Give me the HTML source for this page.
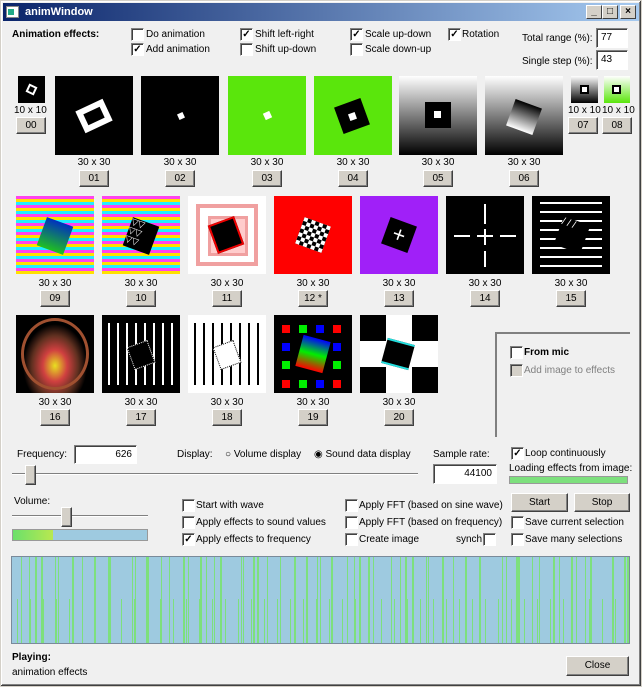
<!DOCTYPE html>
<html><head><meta charset="utf-8"><style>
*{box-sizing:border-box;margin:0;padding:0}
body{width:642px;height:687px;background:#f0f0f0;font-family:"Liberation Sans",sans-serif;font-size:10px;color:#000;position:relative;overflow:hidden}
.a{position:absolute;white-space:nowrap}
.win{position:absolute;left:0;top:0;width:642px;height:687px;border:1px solid #d4d0c8;box-shadow:inset -1px -1px #404040,inset 1px 1px #fff,inset -2px -2px #808080}
.title{position:absolute;left:3px;top:3px;width:636px;height:18px;background:linear-gradient(90deg,#0a246a,#a6caf0);color:#fff;font-weight:bold;font-size:11px;line-height:18px;padding-left:22px}
.tb{position:absolute;top:5px;width:16px;height:14px;background:#d4d0c8;border:1px solid;border-color:#fff #404040 #404040 #fff;font-size:10px;line-height:12px;text-align:center;font-weight:bold;color:#000}
.btn{position:absolute;height:17px;background:#d4d0c8;border:1px solid;border-color:#fff #404040 #404040 #fff;box-shadow:inset -1px -1px #808080;text-align:center;line-height:15px;font-size:10px}
.cb{position:absolute;width:13px;height:13px;background:#fff;border:1px solid;border-color:#808080 #fff #fff #808080;box-shadow:inset 1px 1px #404040;font-size:10px;line-height:11px;text-align:center;font-weight:bold}
.inp{position:absolute;background:#fff;border:1px solid;border-color:#808080 #fff #fff #808080;box-shadow:inset 1px 1px #404040;padding:3px 4px;font-size:10px}
.im{position:absolute;overflow:hidden}
.lbl{position:absolute;width:78px;text-align:center}
.sq{position:absolute}
.stripe{background:repeating-linear-gradient(180deg,#ff44ee 0 3px,#ffe000 3px 6px,#22eeff 6px 9px),#f4f}
</style></head><body>
<div class="win"></div>
<div class="title">animWindow</div>
<div class="a" style="left:6px;top:6px;width:13px;height:12px;background:#fff;border:1px solid #888"><div style="position:absolute;left:1px;top:2px;width:6px;height:6px;background:#2a8"></div></div>
<div class="tb" style="left:586px">_</div><div class="tb" style="left:602px">□</div><div class="tb" style="left:620px">×</div>

<div class="a" style="left:12px;top:29px;font-weight:bold">Animation effects:</div>
<div class="cb" style="left:131px;top:28px"></div><div class="a" style="left:146px;top:29px">Do animation</div>
<div class="cb" style="left:131px;top:43px">✓</div><div class="a" style="left:146px;top:44px">Add animation</div>
<div class="cb" style="left:240px;top:28px">✓</div><div class="a" style="left:255px;top:29px">Shift left-right</div>
<div class="cb" style="left:240px;top:43px"></div><div class="a" style="left:255px;top:44px">Shift up-down</div>
<div class="cb" style="left:350px;top:28px">✓</div><div class="a" style="left:365px;top:29px">Scale up-down</div>
<div class="cb" style="left:350px;top:43px"></div><div class="a" style="left:365px;top:44px">Scale down-up</div>
<div class="cb" style="left:448px;top:28px">✓</div><div class="a" style="left:462px;top:29px">Rotation</div>
<div class="a" style="left:522px;top:33px">Total range (%):</div><div class="inp" style="left:596px;top:28px;width:32px;height:20px">77</div>
<div class="a" style="left:522px;top:56px">Single step (%):</div><div class="inp" style="left:596px;top:50px;width:32px;height:20px">43</div>

<!-- row1 -->
<div class="im" style="left:18px;top:76px;width:27px;height:27px;background:#000"><div class="sq" style="left:9px;top:9px;width:9px;height:9px;border:2px solid #fff;transform:rotate(25deg)"></div></div>
<div class="a" style="left:14px;top:105px">10 x 10</div><div class="btn" style="left:16px;top:117px;width:30px">00</div>

<div class="im" style="left:55px;top:76px;width:78px;height:79px;background:#000"><div class="sq" style="left:24px;top:28px;width:30px;height:24px;border:6px solid #fff;transform:rotate(-25deg)"></div></div>
<div class="im" style="left:141px;top:76px;width:78px;height:79px;background:#000"><div class="sq" style="left:37px;top:37px;width:6px;height:6px;background:#fff;transform:rotate(-25deg)"></div></div>
<div class="im" style="left:228px;top:76px;width:78px;height:79px;background:#5ae60c"><div class="sq" style="left:36px;top:36px;width:7px;height:7px;background:#fff;transform:rotate(-25deg)"></div></div>
<div class="im" style="left:314px;top:76px;width:78px;height:79px;background:#5ae60c"><div class="sq" style="left:24px;top:26px;width:28px;height:28px;background:#000;transform:rotate(-20deg)"></div><div class="sq" style="left:35px;top:37px;width:7px;height:7px;background:#fff;transform:rotate(-20deg)"></div></div>
<div class="im" style="left:399px;top:76px;width:78px;height:79px;background:linear-gradient(#fff,#000)"><div class="sq" style="left:26px;top:26px;width:26px;height:26px;background:#000"></div><div class="sq" style="left:35px;top:35px;width:7px;height:7px;background:#fff"></div></div>
<div class="im" style="left:485px;top:76px;width:78px;height:79px;background:linear-gradient(#fff,#000)"><div class="sq" style="left:25px;top:27px;width:28px;height:28px;background:linear-gradient(#000,#fff);transform:rotate(20deg)"></div></div>
<div class="im" style="left:571px;top:76px;width:27px;height:27px;background:linear-gradient(#fff,#000)"><div class="sq" style="left:9px;top:9px;width:9px;height:9px;background:#000;border:2px solid #000"><div style="width:5px;height:5px;background:#fff"></div></div></div>
<div class="im" style="left:604px;top:76px;width:26px;height:27px;background:linear-gradient(#fff,#5ae60c)"><div class="sq" style="left:8px;top:9px;width:9px;height:9px;background:#000;border:2px solid #000"><div style="width:5px;height:5px;background:#fff"></div></div></div>
<div class="a" style="left:568px;top:105px">10 x 10</div><div class="a" style="left:602px;top:105px">10 x 10</div>
<div class="btn" style="left:568px;top:117px;width:30px">07</div><div class="btn" style="left:602px;top:117px;width:30px">08</div>

<div class="lbl" style="left:55px;top:157px">30 x 30</div><div class="btn" style="left:79px;top:170px;width:30px">01</div>
<div class="lbl" style="left:141px;top:157px">30 x 30</div><div class="btn" style="left:165px;top:170px;width:30px">02</div>
<div class="lbl" style="left:228px;top:157px">30 x 30</div><div class="btn" style="left:252px;top:170px;width:30px">03</div>
<div class="lbl" style="left:314px;top:157px">30 x 30</div><div class="btn" style="left:338px;top:170px;width:30px">04</div>
<div class="lbl" style="left:399px;top:157px">30 x 30</div><div class="btn" style="left:423px;top:170px;width:30px">05</div>
<div class="lbl" style="left:485px;top:157px">30 x 30</div><div class="btn" style="left:509px;top:170px;width:30px">06</div>

<!-- row2 -->
<div class="im stripe" style="left:16px;top:196px;width:78px;height:78px"><div class="sq" style="left:25px;top:25px;width:28px;height:30px;background:linear-gradient(#0030c0,#20c020);transform:rotate(20deg)"></div></div>
<div class="im stripe" style="left:102px;top:196px;width:78px;height:78px"><div class="sq" style="left:25px;top:25px;width:28px;height:30px;background:#000;transform:rotate(20deg);color:#fff;font-size:9px;line-height:9px">▽▽<br>▽▽<br>▽▽</div></div>
<div class="im" style="left:188px;top:196px;width:78px;height:78px;background:#fff"><div class="sq" style="left:8px;top:8px;width:62px;height:62px;border:4px solid #f0a0a0"></div><div class="sq" style="left:20px;top:20px;width:40px;height:40px;background:#fcc;border:3px solid #f0a0a0"></div><div class="sq" style="left:24px;top:24px;width:28px;height:30px;background:#000;border:2px solid #e00;transform:rotate(-20deg)"></div></div>
<div class="im" style="left:274px;top:196px;width:78px;height:78px;background:#f00"><div class="sq" style="left:25px;top:25px;width:28px;height:28px;transform:rotate(20deg);background:conic-gradient(#000 25%,#fff 0 50%,#000 0 75%,#fff 0);background-size:8px 8px"></div></div>
<div class="im" style="left:360px;top:196px;width:78px;height:78px;background:#a020f8"><div class="sq" style="left:25px;top:25px;width:28px;height:28px;background:#000;transform:rotate(20deg);color:#fff;font-size:22px;line-height:28px;text-align:center">+</div></div>
<div class="im" style="left:446px;top:196px;width:78px;height:78px;background:#000"><div class="sq" style="left:38px;top:8px;width:2px;height:20px;background:#fff"></div><div class="sq" style="left:38px;top:33px;width:2px;height:16px;background:#fff"></div><div class="sq" style="left:38px;top:55px;width:2px;height:16px;background:#fff"></div><div class="sq" style="left:8px;top:39px;width:16px;height:2px;background:#fff"></div><div class="sq" style="left:31px;top:39px;width:16px;height:2px;background:#fff"></div><div class="sq" style="left:54px;top:39px;width:16px;height:2px;background:#fff"></div></div>
<div class="im" style="left:532px;top:196px;width:78px;height:78px;background:#000"><div class="sq" style="left:8px;top:6px;width:62px;height:66px;background:repeating-linear-gradient(#fff 0 2px,transparent 2px 9px)"></div><div class="sq" style="left:26px;top:24px;width:28px;height:30px;background:#000;transform:rotate(20deg);color:#fff">/ / /</div></div>

<div class="lbl" style="left:16px;top:278px">30 x 30</div><div class="btn" style="left:40px;top:290px;width:30px">09</div>
<div class="lbl" style="left:102px;top:278px">30 x 30</div><div class="btn" style="left:126px;top:290px;width:30px">10</div>
<div class="lbl" style="left:188px;top:278px">30 x 30</div><div class="btn" style="left:212px;top:290px;width:30px">11</div>
<div class="lbl" style="left:274px;top:278px">30 x 30</div><div class="btn" style="left:298px;top:290px;width:30px">12 *</div>
<div class="lbl" style="left:360px;top:278px">30 x 30</div><div class="btn" style="left:384px;top:290px;width:30px">13</div>
<div class="lbl" style="left:446px;top:278px">30 x 30</div><div class="btn" style="left:470px;top:290px;width:30px">14</div>
<div class="lbl" style="left:532px;top:278px">30 x 30</div><div class="btn" style="left:556px;top:290px;width:30px">15</div>

<!-- row3 -->
<div class="im" style="left:16px;top:315px;width:78px;height:78px;background:radial-gradient(ellipse at 50% 65%,#e8e020 0,#d04040 22%,#603020 42%,#000 58%)"><div class="sq" style="left:5px;top:3px;width:68px;height:72px;border:3px solid #a05030;border-radius:50%"></div></div>
<div class="im" style="left:102px;top:315px;width:78px;height:78px;background:#000"><div class="sq" style="left:6px;top:8px;width:68px;height:62px;background:repeating-linear-gradient(90deg,#fff 0 2px,transparent 2px 9px)"></div><div class="sq" style="left:28px;top:28px;width:22px;height:24px;background:#000;transform:rotate(-20deg);border:1px dotted #fff"></div></div>
<div class="im" style="left:188px;top:315px;width:78px;height:78px;background:#fff"><div class="sq" style="left:6px;top:8px;width:68px;height:62px;background:repeating-linear-gradient(90deg,#000 0 2px,transparent 2px 9px)"></div><div class="sq" style="left:28px;top:28px;width:22px;height:24px;background:#fff;transform:rotate(-20deg);border:1px dotted #000"></div></div>
<div class="im" style="left:274px;top:315px;width:78px;height:78px;background:#000"><div class="sq" style="left:8px;top:10px;width:8px;height:8px;background:#f00;box-shadow:17px 0 #0e0,34px 0 #00f,51px 0 #f00,0 18px #00f,51px 18px #00f,0 36px #0e0,51px 36px #0e0,0 55px #f00,17px 55px #0e0,34px 55px #00f,51px 55px #f00"></div><div class="sq" style="left:25px;top:23px;width:28px;height:32px;background:linear-gradient(#00f,#0e0,#f00);transform:rotate(15deg)"></div></div>
<div class="im" style="left:360px;top:315px;width:78px;height:78px;background:#fff"><div class="sq" style="left:0;top:0;width:26px;height:26px;background:#000"></div><div class="sq" style="left:52px;top:0;width:26px;height:26px;background:#000"></div><div class="sq" style="left:0;top:52px;width:26px;height:26px;background:#000"></div><div class="sq" style="left:52px;top:52px;width:26px;height:26px;background:#000"></div><div class="sq" style="left:24px;top:26px;width:28px;height:26px;background:#000;transform:rotate(15deg);border-top:2px solid #2dd;border-bottom:2px solid #2dd"></div></div>

<div class="lbl" style="left:16px;top:397px">30 x 30</div><div class="btn" style="left:40px;top:409px;width:30px">16</div>
<div class="lbl" style="left:102px;top:397px">30 x 30</div><div class="btn" style="left:126px;top:409px;width:30px">17</div>
<div class="lbl" style="left:188px;top:397px">30 x 30</div><div class="btn" style="left:212px;top:409px;width:30px">18</div>
<div class="lbl" style="left:274px;top:397px">30 x 30</div><div class="btn" style="left:298px;top:409px;width:30px">19</div>
<div class="lbl" style="left:360px;top:397px">30 x 30</div><div class="btn" style="left:384px;top:409px;width:30px">20</div>

<!-- group -->
<div class="a" style="left:495px;top:332px;width:135px;height:105px;border-top:2px solid #808080;border-left:2px solid #808080"></div>
<div class="cb" style="left:510px;top:346px"></div><div class="a" style="left:524px;top:347px;font-weight:bold">From mic</div>
<div class="cb" style="left:510px;top:364px;background:#d4d0c8"></div><div class="a" style="left:524px;top:365px;color:#808080">Add image to effects</div>

<!-- controls -->
<div class="a" style="left:17px;top:449px">Frequency:</div><div class="inp" style="left:74px;top:445px;width:63px;height:19px;text-align:right">626</div>
<div class="a" style="left:177px;top:449px">Display:</div>
<div class="a" style="left:225px;top:449px">○ Volume display</div><div class="a" style="left:314px;top:449px">◉ Sound data display</div>
<div class="a" style="left:12px;top:473px;width:406px;height:2px;background:#808080;border-bottom:1px solid #fff"></div>
<div class="btn" style="left:25px;top:465px;width:11px;height:20px"></div>
<div class="a" style="left:433px;top:449px">Sample rate:</div><div class="inp" style="left:433px;top:464px;width:64px;height:20px;text-align:right">44100</div>
<div class="cb" style="left:511px;top:447px">✓</div><div class="a" style="left:525px;top:448px">Loop continuously</div>
<div class="a" style="left:509px;top:463px">Loading effects from image:</div>
<div class="a" style="left:509px;top:476px;width:119px;height:8px;background:#7de07d;border:1px solid #999"></div>

<div class="a" style="left:14px;top:496px">Volume:</div>
<div class="a" style="left:12px;top:515px;width:136px;height:2px;background:#808080;border-bottom:1px solid #fff"></div>
<div class="btn" style="left:61px;top:507px;width:11px;height:20px"></div>
<div class="a" style="left:12px;top:529px;width:136px;height:12px;background:linear-gradient(90deg,#6be06b,#b8e850 40px,#9ecae0 40px);border:1px solid #999"></div>

<div class="cb" style="left:182px;top:499px"></div><div class="a" style="left:196px;top:500px">Start with wave</div>
<div class="cb" style="left:182px;top:516px"></div><div class="a" style="left:196px;top:517px">Apply effects to sound values</div>
<div class="cb" style="left:182px;top:533px">✓</div><div class="a" style="left:196px;top:534px">Apply effects to frequency</div>
<div class="cb" style="left:345px;top:499px"></div><div class="a" style="left:359px;top:500px">Apply FFT (based on sine wave)</div>
<div class="cb" style="left:345px;top:516px"></div><div class="a" style="left:359px;top:517px">Apply FFT (based on frequency)</div>
<div class="cb" style="left:345px;top:533px"></div><div class="a" style="left:359px;top:534px">Create image</div>
<div class="a" style="left:456px;top:534px">synch</div><div class="cb" style="left:483px;top:533px"></div>
<div class="btn" style="left:511px;top:493px;width:57px;height:19px;line-height:17px">Start</div>
<div class="btn" style="left:574px;top:493px;width:56px;height:19px;line-height:17px">Stop</div>
<div class="cb" style="left:511px;top:516px"></div><div class="a" style="left:525px;top:517px">Save current selection</div>
<div class="cb" style="left:511px;top:533px"></div><div class="a" style="left:525px;top:534px">Save many selections</div>

<!-- wave -->
<div class="a" style="left:11px;top:556px;width:619px;height:88px;border:1px solid #7a8a9a;background:#9ecae0;overflow:hidden">
<div class="a" style="left:0;top:0;width:619px;height:86px;background:repeating-linear-gradient(90deg,transparent 0 17px,#7de07d 17px 18px,transparent 18px 29px,#7de07d 29px 31px,transparent 31px 43px,#7de07d 43px 44px,transparent 44px 53px)"></div>
<div class="a" style="left:0;top:0;width:619px;height:86px;background:repeating-linear-gradient(90deg,transparent 0 9px,#7de07d 9px 10px,transparent 10px 23px,#7de07d 23px 25px,transparent 25px 37px)"></div>
<div class="a" style="left:0;top:42px;width:619px;height:44px;background:repeating-linear-gradient(90deg,transparent 0 5px,#7de07d 5px 6px,transparent 6px 13px)"></div>
</div>

<div class="a" style="left:12px;top:652px;font-weight:bold">Playing:</div>
<div class="a" style="left:12px;top:667px">animation effects</div>
<div class="btn" style="left:566px;top:656px;width:63px;height:20px;line-height:18px">Close</div>
</body></html>
